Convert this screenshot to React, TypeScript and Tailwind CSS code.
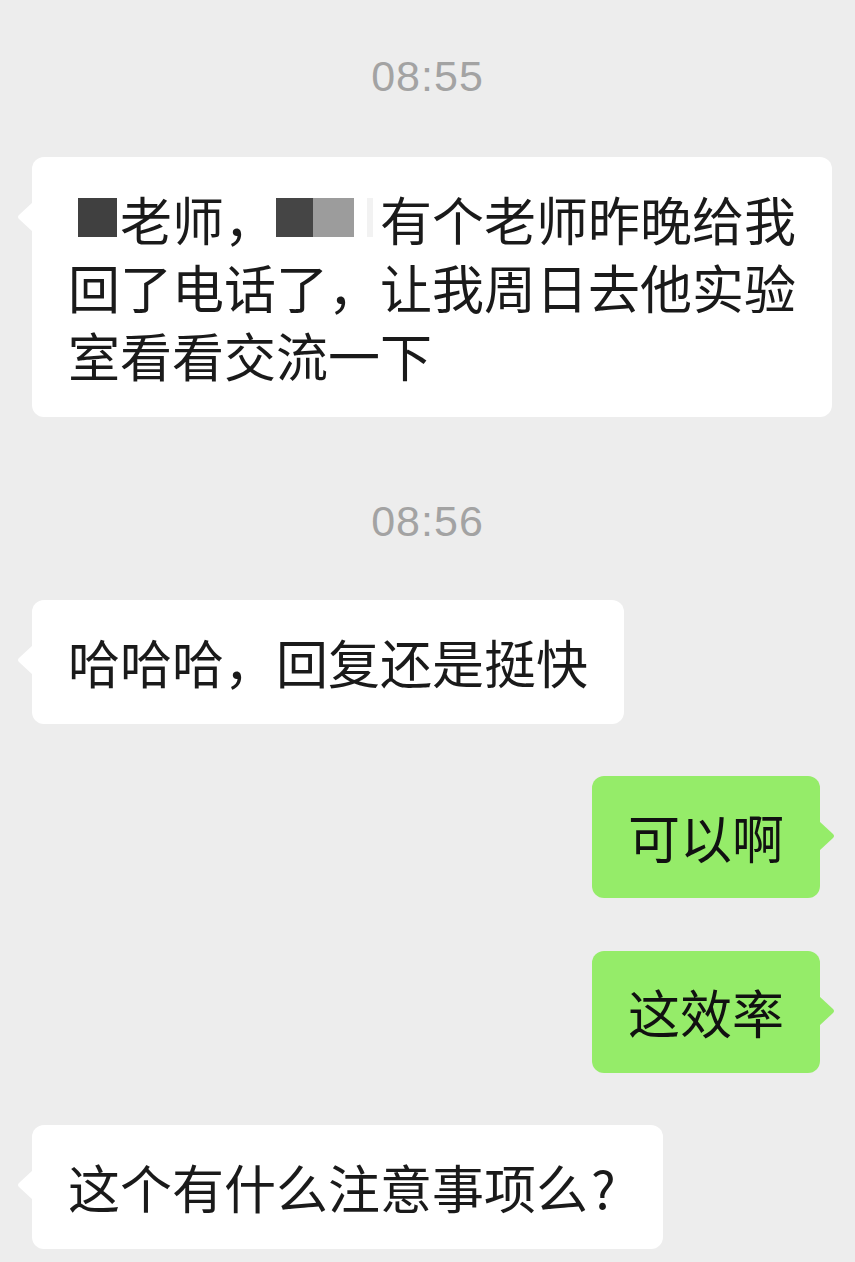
import React from "react";

const cjk = { fontFamily: '"Noto Sans CJK SC", "Noto Sans", sans-serif' };

const TailLeft = () => (
  <svg
    className="absolute left-[-15px] top-[45px]"
    width="16"
    height="30"
    viewBox="0 0 16 30">
    <path d="M16 0 L2 13 Q0 15 2 17 L16 30 Z" fill="#ffffff" />
  </svg>
);

const TailRight = () => (
  <svg
    className="absolute right-[-15px] top-[45px]"
    width="16"
    height="30"
    viewBox="0 0 16 30">
    <path d="M0 0 L14 13 Q16 15 14 17 L0 30 Z" fill="#95ec69" />
  </svg>
);

const Time = ({ text }: { text: string }) => (
  <div
    className="h-[50px] flex items-center justify-center text-[43px] tracking-[1px] text-[#a3a3a3]"
    style={{ fontFamily: '"Liberation Sans", Arial, sans-serif' }}>
    {text}
  </div>
);

const Left = ({ children, className = "" }: { children: React.ReactNode; className?: string }) => (
  <div
    className={`relative self-start ml-[32px] bg-white rounded-[12px] pl-[36px] py-[28px] text-[52px] leading-[68px] text-[#1a1a1a] ${className}`}
    style={cjk}>
    <TailLeft />
    {children}
  </div>
);

const Right = ({ children, className = "" }: { children: React.ReactNode; className?: string }) => (
  <div
    className={`relative self-end mr-[35px] bg-[#95ec69] rounded-[12px] px-[36px] py-[27px] text-[52px] leading-[68px] text-[#111111] ${className}`}
    style={cjk}>
    <TailRight />
    {children}
  </div>
);

export default function App() {
  return (
    <div className="min-h-[1262px] w-full bg-[#ededed] flex flex-col pt-[51px] overflow-hidden">
      <Time text="08:55" />

      {/* first message: name parts blurred out */}
      <Left className="mt-[56px] w-[800px] pr-[32px]">
        <span className="inline-flex w-[52px] h-[68px] items-center align-top">
          <span className="ml-[10px] mt-[-4px] w-[39px] h-[39px] bg-[#404040]" />
        </span>
        老师，
        <span className="inline-flex w-[104px] h-[68px] items-center align-top">
          <span className="mt-[-4px] w-[37px] h-[39px] bg-[#454545]" />
          <span className="mt-[-4px] w-[41px] h-[39px] bg-[#9c9c9c]" />
          <span className="ml-[13px] mt-[-4px] w-[6px] h-[39px] bg-[#f2f2f2]" />
        </span>
        有个老师昨晚给我回了电话了，让我周日去他实验室看看交流一下
      </Left>

      <div className="mt-[79px]">
        <Time text="08:56" />
      </div>

      <Left className="mt-[54px] pr-[36px]">哈哈哈，回复还是挺快</Left>

      <Right className="mt-[52px]">可以啊</Right>

      <Right className="mt-[53px]">这效率</Right>

      <Left className="mt-[52px] pr-[36px]">
        这个有什么注意事项么
        <span className="inline-block w-[39px] pl-[3px]">?</span>
      </Left>
    </div>
  );
}
